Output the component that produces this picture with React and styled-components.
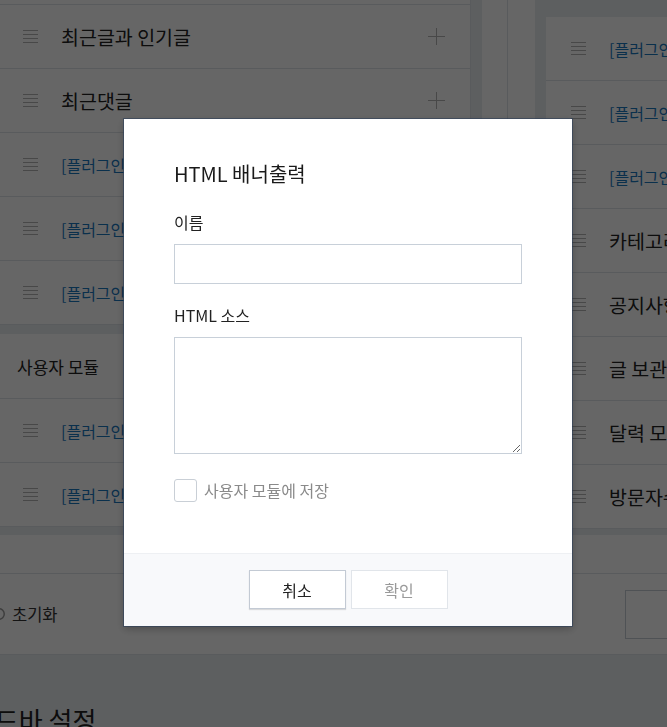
import React from 'react';
import styled, { createGlobalStyle } from 'styled-components';
import { RotateCcw } from 'lucide-react';

const GlobalStyle = createGlobalStyle`
  html, body {
    margin: 0;
    padding: 0;
    background: #e9edf1;
    font-family: "Noto Sans CJK KR", "Noto Sans", sans-serif;
    overflow: hidden;
  }
  * { box-sizing: border-box; }
`;

const Page = styled.div`
  width: 667px;
  height: 727px;
  overflow: hidden;
`;

const Top = styled.div`
  display: flex;
  height: 535px;
  overflow: hidden;
`;

const LeftCol = styled.div`
  width: 471px;
  flex-shrink: 0;
  display: flex;
  flex-direction: column;
  gap: 9px;
`;

const Card = styled.div`
  background: #fff;
  border-right: ${p => (p.$edge ? '1px solid #dfe3e8' : 'none')};
`;

const Spacer = styled.div`
  height: 5px;
  border-bottom: 1px solid #dfe3e8;
`;

const Row = styled.div`
  height: 64px;
  display: flex;
  align-items: center;
  padding: 0 25px 0 ${p => (p.$wide ? '25px' : '23px')};
  border-bottom: 1px solid #dfe3e8;
`;

const Handle = styled.svg`
  width: 15px;
  height: 13px;
  flex-shrink: 0;
  margin-right: 23px;
`;

const Label = styled.span`
  flex: 1;
  white-space: nowrap;
  overflow: hidden;
  font-size: ${p => (p.$plugin ? '16px' : '19.5px')};
  color: ${p => (p.$plugin ? '#1b78bf' : '#222')};
`;

const ModuleHead = styled.div`
  height: 65px;
  display: flex;
  align-items: center;
  padding-left: 17px;
  font-size: 17px;
  color: #222;
  border-bottom: 1px solid #dfe3e8;
`;

const Mid = styled.div`
  width: 53px;
  margin-left: 11px;
  flex-shrink: 0;
  background: #fff;
  display: flex;
`;

const MidLine = styled.div`
  width: 26px;
  border-right: 1px solid #dfe3e8;
`;

const RightCol = styled.div`
  width: 400px;
  flex-shrink: 0;
  margin-left: 11px;
  padding-top: 17px;
`;

const Footer = styled.div`
  background: #fff;
`;

const FooterTop = styled.div`
  height: 39px;
  border-bottom: 1px solid #dfe3e8;
`;

const FooterRow = styled.div`
  height: 81px;
  display: flex;
  align-items: center;
  justify-content: space-between;
  border-bottom: 1px solid #dfe3e8;
`;

const ResetBtn = styled.div`
  display: flex;
  align-items: center;
  gap: 6px;
  margin-left: -8px;
  font-size: 16.5px;
  color: #333;
`;

const SaveBox = styled.div`
  width: 60px;
  height: 49px;
  margin-right: -18px;
  border: 1px solid #c5ccd5;
  background: #fff;
`;

const Heading = styled.h2`
  margin: 46px 0 0 -53px;
  font-size: 26px;
  font-weight: 400;
  color: #222;
  white-space: nowrap;
`;

const Overlay = styled.div`
  position: fixed;
  inset: 0;
  background: rgba(0, 0, 0, 0.6);
  padding: 119px 0 0 124px;
`;

const Modal = styled.div`
  width: 448px;
  background: #fff;
  box-shadow: 0 0 0 1px rgba(40, 60, 90, 0.55), 0 3px 8px rgba(0, 0, 0, 0.25);
`;

const Body = styled.div`
  padding: 41px 50px 51px;
`;

const Title = styled.h3`
  margin: 0 0 23px;
  font-size: 20px;
  line-height: 28px;
  font-weight: 400;
  color: #1a1a1a;
`;

const FieldLabel = styled.div`
  font-size: 16px;
  line-height: 22px;
  color: #222;
  margin-bottom: 11px;
`;

const Input = styled.input`
  display: block;
  width: 100%;
  height: 40px;
  border: 1px solid #c8d0d9;
  border-radius: 0;
  margin-bottom: 20px;
  outline: none;
`;

const TextArea = styled.textarea`
  display: block;
  width: 100%;
  height: 117px;
  border: 1px solid #c8d0d9;
  border-radius: 0;
  margin: 0 0 24px;
  outline: none;
`;

const CheckRow = styled.label`
  display: flex;
  align-items: center;
  gap: 7px;
  font-size: 16px;
  color: #8a8a8a;
`;

const Box = styled.span`
  width: 23px;
  height: 23px;
  border: 1px solid #c9cfd6;
  border-radius: 3px;
  background: #fff;
`;

const Actions = styled.div`
  height: 73px;
  display: flex;
  justify-content: center;
  gap: 5px;
  padding-top: 16px;
  background: #f8f9fb;
  border-top: 1px solid #eef0f3;
`;

const Button = styled.button`
  width: 97px;
  height: 39px;
  background: #fff;
  font-family: inherit;
  font-size: 16px;
  border: 1px solid ${p => (p.$primary ? '#e1e5ea' : '#c3cad4')};
  color: ${p => (p.$primary ? '#9a9a9a' : '#222')};
  box-shadow: ${p => (p.$primary ? 'none' : '0 1px 1px rgba(0,0,0,0.12)')};
`;

const Plus = () => (
  <svg width="17" height="17" viewBox="0 0 17 17">
    <path d="M8.5 0v17M0 8.5h17" stroke="#b5b5b5" strokeWidth="1" />
  </svg>
);

const Lines = () => (
  <Handle viewBox="0 0 15 13">
    <path d="M0 .5h15M0 4.5h15M0 8.5h15M0 12.5h15" stroke="#b4b4b4" strokeWidth="1" />
  </Handle>
);

const Item = ({ label, plugin, plus, wide }) => (
  <Row $wide={wide}>
    <Lines />
    <Label $plugin={plugin}>{label}</Label>
    {plus && <Plus />}
  </Row>
);

const App = () => {
  return (
    <Page>
      <GlobalStyle />
      <Top>
        <LeftCol>
          <Card $edge>
            <Spacer />
            <Item label="최근글과 인기글" plus />
            <Item label="최근댓글" plus />
            <Item label="[플러그인] 태그 클라우드" plugin />
            <Item label="[플러그인] 검색" plugin />
            <Item label="[플러그인] 구독하기" plugin />
          </Card>
          <Card $edge>
            <ModuleHead>사용자 모듈</ModuleHead>
            <Item label="[플러그인] 배너" plugin />
            <Item label="[플러그인] 광고" plugin />
          </Card>
        </LeftCol>
        <Mid>
          <MidLine />
        </Mid>
        <RightCol>
          <Card>
            <Item wide label="[플러그인] 프로필" plugin />
            <Item wide label="[플러그인] 링크" plugin />
            <Item wide label="[플러그인] 공지" plugin />
            <Item wide label="카테고리" />
            <Item wide label="공지사항" />
            <Item wide label="글 보관함" />
            <Item wide label="달력 모듈" />
            <Item wide label="방문자수" />
          </Card>
        </RightCol>
      </Top>
      <Footer>
        <FooterTop />
        <FooterRow>
          <ResetBtn>
            <RotateCcw size={14} color="#999" strokeWidth={2.5} />
            초기화
          </ResetBtn>
          <SaveBox />
        </FooterRow>
      </Footer>
      <Heading>사이드바 설정</Heading>

      <Overlay>
        <Modal>
          <Body>
            <Title>HTML 배너출력</Title>
            <FieldLabel>이름</FieldLabel>
            <Input type="text" />
            <FieldLabel>HTML 소스</FieldLabel>
            <TextArea />
            <CheckRow>
              <Box />
              사용자 모듈에 저장
            </CheckRow>
          </Body>
          <Actions>
            <Button>취소</Button>
            <Button $primary>확인</Button>
          </Actions>
        </Modal>
      </Overlay>
    </Page>
  );
};

export default App;
